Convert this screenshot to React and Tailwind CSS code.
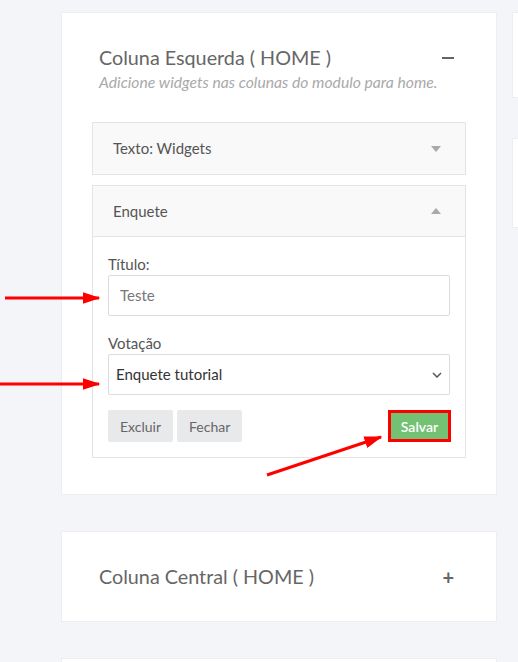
const Caret = ({ up }) => (
  <svg width="10" height="6" viewBox="0 0 10 6" className="block">
    {up ? <path d="M0 6 L5 0 L10 6 Z" fill="#a9a9a9" /> : <path d="M0 0 L10 0 L5 6 Z" fill="#a9a9a9" />}
  </svg>
);

const Arrows = () => (
  <svg className="absolute inset-0 pointer-events-none" width="518" height="662" viewBox="0 0 518 662">
    <defs>
      <marker id="head" markerWidth="6" markerHeight="4" refX="5.5" refY="2" orient="auto" markerUnits="strokeWidth">
        <path d="M0 0 L6 2 L0 4 Z" fill="#ff0000" />
      </marker>
    </defs>
    <line x1="5" y1="298" x2="99" y2="298" stroke="#ff0000" strokeWidth="3" markerEnd="url(#head)" />
    <line x1="0" y1="384" x2="99" y2="384" stroke="#ff0000" strokeWidth="3" markerEnd="url(#head)" />
    <line x1="267" y1="475" x2="381" y2="437" stroke="#ff0000" strokeWidth="3" markerEnd="url(#head)" />
  </svg>
);

export default function App() {
  return (
    <div
      className="relative w-[518px] h-[662px] overflow-hidden bg-[#f3f5f8] flex items-start"
      style={{ fontFamily: "Lato, 'Open Sans', sans-serif" }}
    >
      {/* Left column */}
      <div className="ml-[61px] w-[436px] shrink-0 flex flex-col">
        {/* Coluna Esquerda */}
        <div className="shrink-0 mt-[12px] bg-white border border-[#eceef1] pt-[31px] pb-[36px]">
          <div className="pl-[37px] pr-[42px] flex items-start justify-between">
            <div>
              <h2 className="text-[19.75px] leading-[28px] text-[#666]">Coluna Esquerda ( HOME )</h2>
              <p className="text-[15.7px] leading-[20px] italic text-[#a9a9a9]">
                Adicione widgets nas colunas do modulo para home.
              </p>
            </div>
            <div className="mt-[13px] w-[12px] h-[2px] bg-[#666]" />
          </div>

          <div className="mx-[30px] mt-[30px] flex flex-col gap-[10px]">
            {/* Texto: Widgets */}
            <div className="border border-[#e4e4e4] bg-[#f9f9f9] h-[53px] pl-[20px] pr-[24px] flex items-center justify-between">
              <span className="text-[15px] text-[#555]">Texto: Widgets</span>
              <Caret />
            </div>

            {/* Enquete */}
            <div className="border border-[#e4e4e4] bg-white">
              <div className="bg-[#f9f9f9] h-[51px] border-b border-[#e4e4e4] pl-[20px] pr-[24px] flex items-center justify-between">
                <span className="text-[15px] text-[#555]">Enquete</span>
                <Caret up />
              </div>
              <div className="px-[15px] pt-[17px] pb-[15px]">
                <label className="block text-[15px] leading-[20px] text-[#555] mb-[1px]">Título:</label>
                <div className="h-[41px] border border-[#dcdcdc] rounded-[2px] flex items-center px-[11px] text-[15px] text-[#777]">
                  Teste
                </div>

                <label className="block mt-[17px] text-[15px] leading-[20px] text-[#555] mb-[1px]">Votação</label>
                <div className="h-[41px] border border-[#dcdcdc] rounded-[2px] flex items-center justify-between pl-[7px] pr-[7px] text-[15px] text-[#333]">
                  <span>Enquete tutorial</span>
                  <svg width="10" height="6" viewBox="0 0 10 6">
                    <path d="M1 1 L5 5 L9 1" fill="none" stroke="#555" strokeWidth="1.5" />
                  </svg>
                </div>

                <div className="mt-[15px] flex items-center justify-between">
                  <div className="flex gap-[4px]">
                    <button className="h-[32px] px-[12px] rounded-[2px] bg-[#e8e9eb] text-[14px] text-[#666]">Excluir</button>
                    <button className="h-[32px] px-[12px] rounded-[2px] bg-[#e8e9eb] text-[14px] text-[#666]">Fechar</button>
                  </div>
                  <button className="h-[32px] w-[63px] border-[3px] border-[#ff0000] bg-[#73c274] text-[14px] text-white font-semibold mr-[-1px]">
                    Salvar
                  </button>
                </div>
              </div>
            </div>
          </div>
        </div>

        {/* Coluna Central */}
        <div className="shrink-0 mt-[36px] bg-white border border-[#eceef1] h-[91px] pl-[37px] pr-[42px] flex items-center justify-between">
          <h2 className="text-[19.75px] text-[#666]">Coluna Central ( HOME )</h2>
          <span className="text-[20px] font-bold text-[#666] leading-none">+</span>
        </div>

        <div className="shrink-0 mt-[36px] bg-white border border-[#eceef1] h-[80px]" />
      </div>

      {/* Right column sliver */}
      <div className="ml-[15px] w-[200px] shrink-0 flex flex-col">
        <div className="shrink-0 mt-[12px] h-[86px] bg-white border border-[#eceef1]" />
        <div className="shrink-0 mt-[40px] h-[90px] bg-white border border-[#eceef1]" />
      </div>

      <Arrows />
    </div>
  );
}
